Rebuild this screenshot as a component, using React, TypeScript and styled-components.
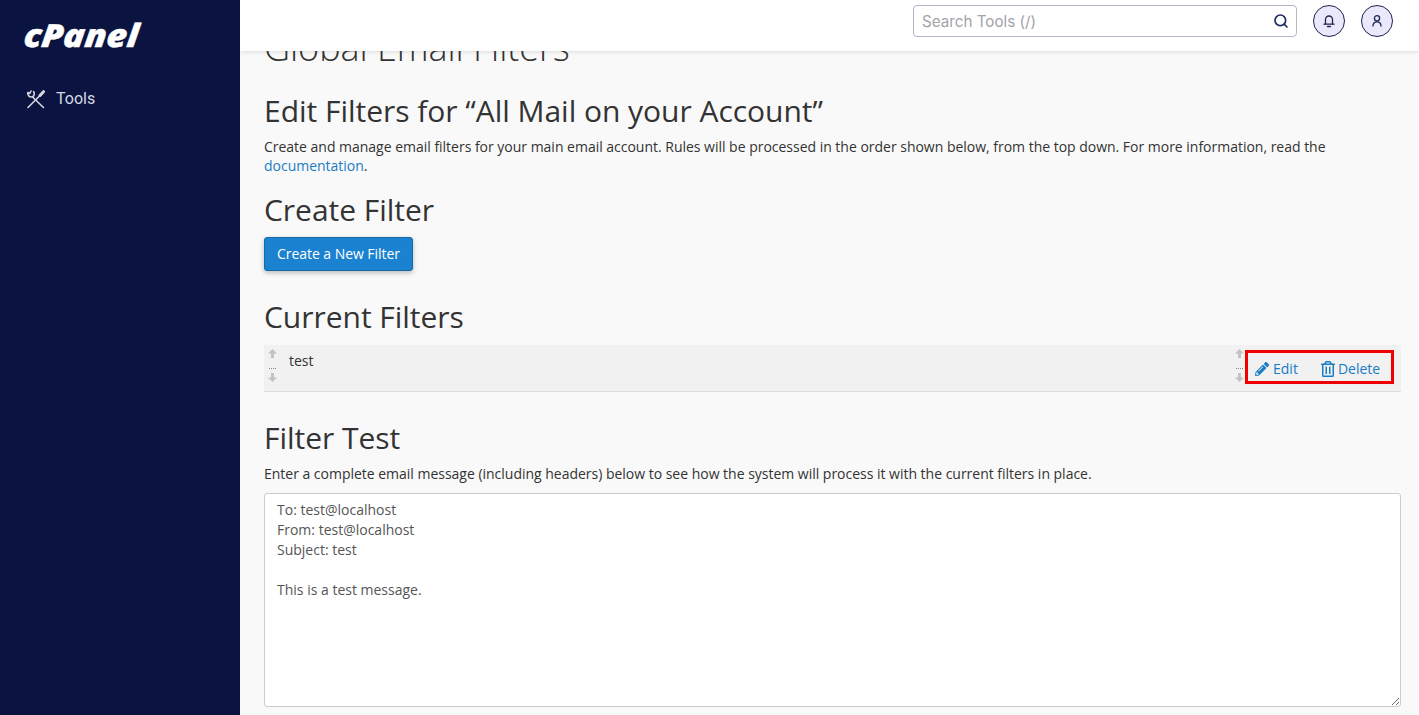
import React from 'react';
import styled, { createGlobalStyle } from 'styled-components';
import { Search } from 'lucide-react';
import { FaPencilAlt, FaRegTrashAlt } from 'react-icons/fa';

const GlobalStyle = createGlobalStyle`
  html, body {
    margin: 0;
    height: 100%;
    overflow: hidden;
  }
  #root {
    height: 100%;
  }
  * {
    box-sizing: border-box;
  }
`;

const Root = styled.div`
  display: flex;
  height: 715px;
  font-family: 'Open Sans', sans-serif;
  color: #333;
  background: #f9f9f9;
`;

const Sidebar = styled.aside`
  width: 240px;
  flex-shrink: 0;
  background: #0b1441;
  padding: 17px 0 0 24px;
`;

const Logo = styled.div`
  margin-left: -2px;
  font-family: 'Open Sans', sans-serif;
  font-size: 32px;
  line-height: 36px;
  font-weight: 800;
  font-style: italic;
  -webkit-text-stroke: 0.4px #fff;
  color: #fff;
  transform: scaleX(1.1) skewX(-6deg);
  transform-origin: left bottom;
`;

const NavItem = styled.a`
  display: flex;
  align-items: center;
  gap: 9px;
  margin-top: 35px;
  padding-left: 1px;
  font-family: Roboto, sans-serif;
  font-size: 16px;
  line-height: 22px;
  color: #d5d8e2;
`;

const Main = styled.div`
  flex: 1;
  min-width: 0;
  display: flex;
  flex-direction: column;
  overflow: hidden;
`;

const Header = styled.header`
  position: relative;
  z-index: 2;
  height: 51px;
  flex-shrink: 0;
  display: flex;
  align-items: center;
  justify-content: flex-end;
  gap: 16px;
  padding: 0 26px 9px 0;
  background: #fff;
  box-shadow: 0 1px 4px rgba(0, 0, 0, 0.12);
`;

const SearchBox = styled.div`
  width: 384px;
  height: 32px;
  display: flex;
  align-items: center;
  justify-content: space-between;
  padding: 0 7px 0 8px;
  background: #fff;
  border: 1px solid #b4b6c6;
  border-radius: 4px;
  font-family: Inter, sans-serif;
  font-size: 15.2px;
  color: #a3a3a8;
`;

const RoundButton = styled.button`
  width: 32px;
  height: 32px;
  display: flex;
  align-items: center;
  justify-content: center;
  padding: 0;
  background: #e9e9fb;
  border: 1px solid #1d2550;
  border-radius: 50%;
  color: #1d2550;
`;

const Content = styled.main`
  flex: 1;
  min-height: 0;
  padding: 0 18px 0 24px;
`;

const PageTitle = styled.h1`
  margin: -23px 0 0;
  font-size: 36px;
  line-height: 40px;
  font-weight: 300;
  letter-spacing: -0.05px;
`;

const SectionTitle = styled.h2<{ $top: number }>`
  margin: ${(p) => p.$top}px 0 0;
  font-size: 30px;
  line-height: 36px;
  font-weight: 400;
  letter-spacing: -0.03px;
`;

const Paragraph = styled.p`
  margin: 8px 0 0;
  font-size: 14px;
  line-height: 19px;
  letter-spacing: -0.015px;
`;

const DocLink = styled.a`
  color: #1a7cc4;
`;

const PrimaryButton = styled.button`
  display: block;
  height: 34px;
  margin-top: 9px;
  padding: 0 12px 2px;
  background: #1a82d1;
  border: 1px solid #1669a8;
  border-radius: 3px;
  box-shadow: 0 2px 5px rgba(0, 0, 0, 0.25);
  color: #fff;
  font-family: 'Open Sans', sans-serif;
  font-size: 14px;
  font-weight: 500;
  letter-spacing: -0.05px;
`;

const FilterRow = styled.div`
  height: 47px;
  margin-top: 10px;
  display: flex;
  background: #f1f1f1;
  border-bottom: 1px solid #ddd;
`;

const Handle = styled.div<{ $narrow?: boolean }>`
  width: ${(p) => (p.$narrow ? 12 : 25)}px;
  flex-shrink: 0;
  display: flex;
  flex-direction: column;
  align-items: center;
  padding: 4px ${(p) => (p.$narrow ? 0 : 8)}px 0 0;
`;

const HandleDots = styled.span`
  width: 7px;
  height: 1px;
  margin: 10px 0 4px;
  border-top: 1px dotted #888;
`;

const HandleArrow = styled.svg<{ $down?: boolean }>`
  width: 9px;
  height: 9px;
  fill: #c2c2c2;
  transform: ${(p) => (p.$down ? 'rotate(180deg)' : 'none')};
`;

const FilterName = styled.div`
  flex: 1;
  padding-top: 6px;
  font-size: 14px;
  line-height: 20px;
`;

const ActionsHighlight = styled.div`
  width: 149px;
  height: 34px;
  margin: 5px 7px 0 0;
  display: flex;
  align-items: center;
  gap: 22px;
  padding: 4px 0 0 7px;
  border: 3px solid #ee0000;
`;

const ActionLink = styled.a<{ $gap: number }>`
  display: flex;
  align-items: center;
  gap: ${(p) => p.$gap}px;
  color: #1a7cc4;
  font-size: 14px;
  line-height: 20px;
`;

const MessageInput = styled.textarea`
  display: block;
  width: 100%;
  height: 214px;
  margin-top: 10px;
  padding: 6px 12px;
  background: #fff;
  border: 1px solid #ccc;
  border-radius: 3px;
  color: #555;
  font-family: 'Open Sans', sans-serif;
  font-size: 14px;
  line-height: 20px;
`;

const ToolsIcon: React.FC = () => (
  <svg width="22" height="22" viewBox="0 0 22 22" fill="none" stroke="currentColor" strokeWidth="1.6" strokeLinecap="round" strokeLinejoin="round">
    <path d="M7.500 9l11 10.500" />
    <path d="M6 3l-1.200 2.500L2.800 4.500C2 7 4.500 9.500 7.500 8.800 9.500 8 9.800 5 8.500 3.500" />
    <path d="M3 19.500L14.500 8" />
    <path d="M15 7.500l3.500-3.800" strokeWidth="3" />
  </svg>
);

const BellIcon: React.FC = () => (
  <svg width="16" height="16" viewBox="0 0 16 16" fill="none" stroke="currentColor" strokeWidth="1.3" strokeLinecap="round">
    <path d="M4.500 11V6.500a3.500 3.500 0 0 1 7 0V11" />
    <path d="M3 11.200h10" />
    <path d="M6.500 13.500h3" />
  </svg>
);

const UserIcon: React.FC = () => (
  <svg width="16" height="16" viewBox="0 0 16 16" fill="none" stroke="currentColor" strokeWidth="1.3" strokeLinecap="round">
    <circle cx="8" cy="5.300" r="2.600" />
    <path d="M4 13c0-2.500 1.500-4.200 4-4.200s4 1.700 4 4.200" />
  </svg>
);

const DragHandle: React.FC<{ narrow?: boolean }> = ({ narrow }) => (
  <Handle $narrow={narrow}>
    <HandleArrow viewBox="0 0 9 9">
      <polygon points="4.500,0 9,4.500 6,4.500 6,9 3,9 3,4.500 0,4.500" />
    </HandleArrow>
    <HandleDots />
    <HandleArrow viewBox="0 0 9 9" $down>
      <polygon points="4.500,0 9,4.500 6,4.500 6,9 3,9 3,4.500 0,4.500" />
    </HandleArrow>
  </Handle>
);

const App: React.FC = () => {
  const sampleMessage =
    'To: test@localhost\nFrom: test@localhost\nSubject: test\n\nThis is a test message.';

  return (
    <Root>
      <GlobalStyle />
      <Sidebar>
        <Logo>cPanel</Logo>
        <NavItem>
          <ToolsIcon />
          Tools
        </NavItem>
      </Sidebar>
      <Main>
        <Header>
          <SearchBox>
            Search Tools (/)
            <Search size={16} strokeWidth={2.5} color="#1d2a5e" />
          </SearchBox>
          <RoundButton>
            <BellIcon />
          </RoundButton>
          <RoundButton>
            <UserIcon />
          </RoundButton>
        </Header>
        <Content>
          <PageTitle>Global Email Filters</PageTitle>
          <SectionTitle $top={25}>Edit Filters for “All Mail on your Account”</SectionTitle>
          <Paragraph>
            Create and manage email filters for your main email account. Rules will be processed in
            the order shown below, from the top down. For more information, read the{' '}
            <DocLink>documentation</DocLink>.
          </Paragraph>
          <SectionTitle $top={17}>Create Filter</SectionTitle>
          <PrimaryButton>Create a New Filter</PrimaryButton>
          <SectionTitle $top={28}>Current Filters</SectionTitle>
          <FilterRow>
            <DragHandle />
            <FilterName>test</FilterName>
            <DragHandle narrow />
            <ActionsHighlight>
              <ActionLink $gap={4}>
                <FaPencilAlt size={14} />
                Edit
              </ActionLink>
              <ActionLink $gap={2}>
                <FaRegTrashAlt size={16} />
                Delete
              </ActionLink>
            </ActionsHighlight>
          </FilterRow>
          <SectionTitle $top={28}>Filter Test</SectionTitle>
          <Paragraph>
            Enter a complete email message (including headers) below to see how the system will
            process it with the current filters in place.
          </Paragraph>
          <MessageInput defaultValue={sampleMessage} />
        </Content>
      </Main>
    </Root>
  );
};

export default App;
